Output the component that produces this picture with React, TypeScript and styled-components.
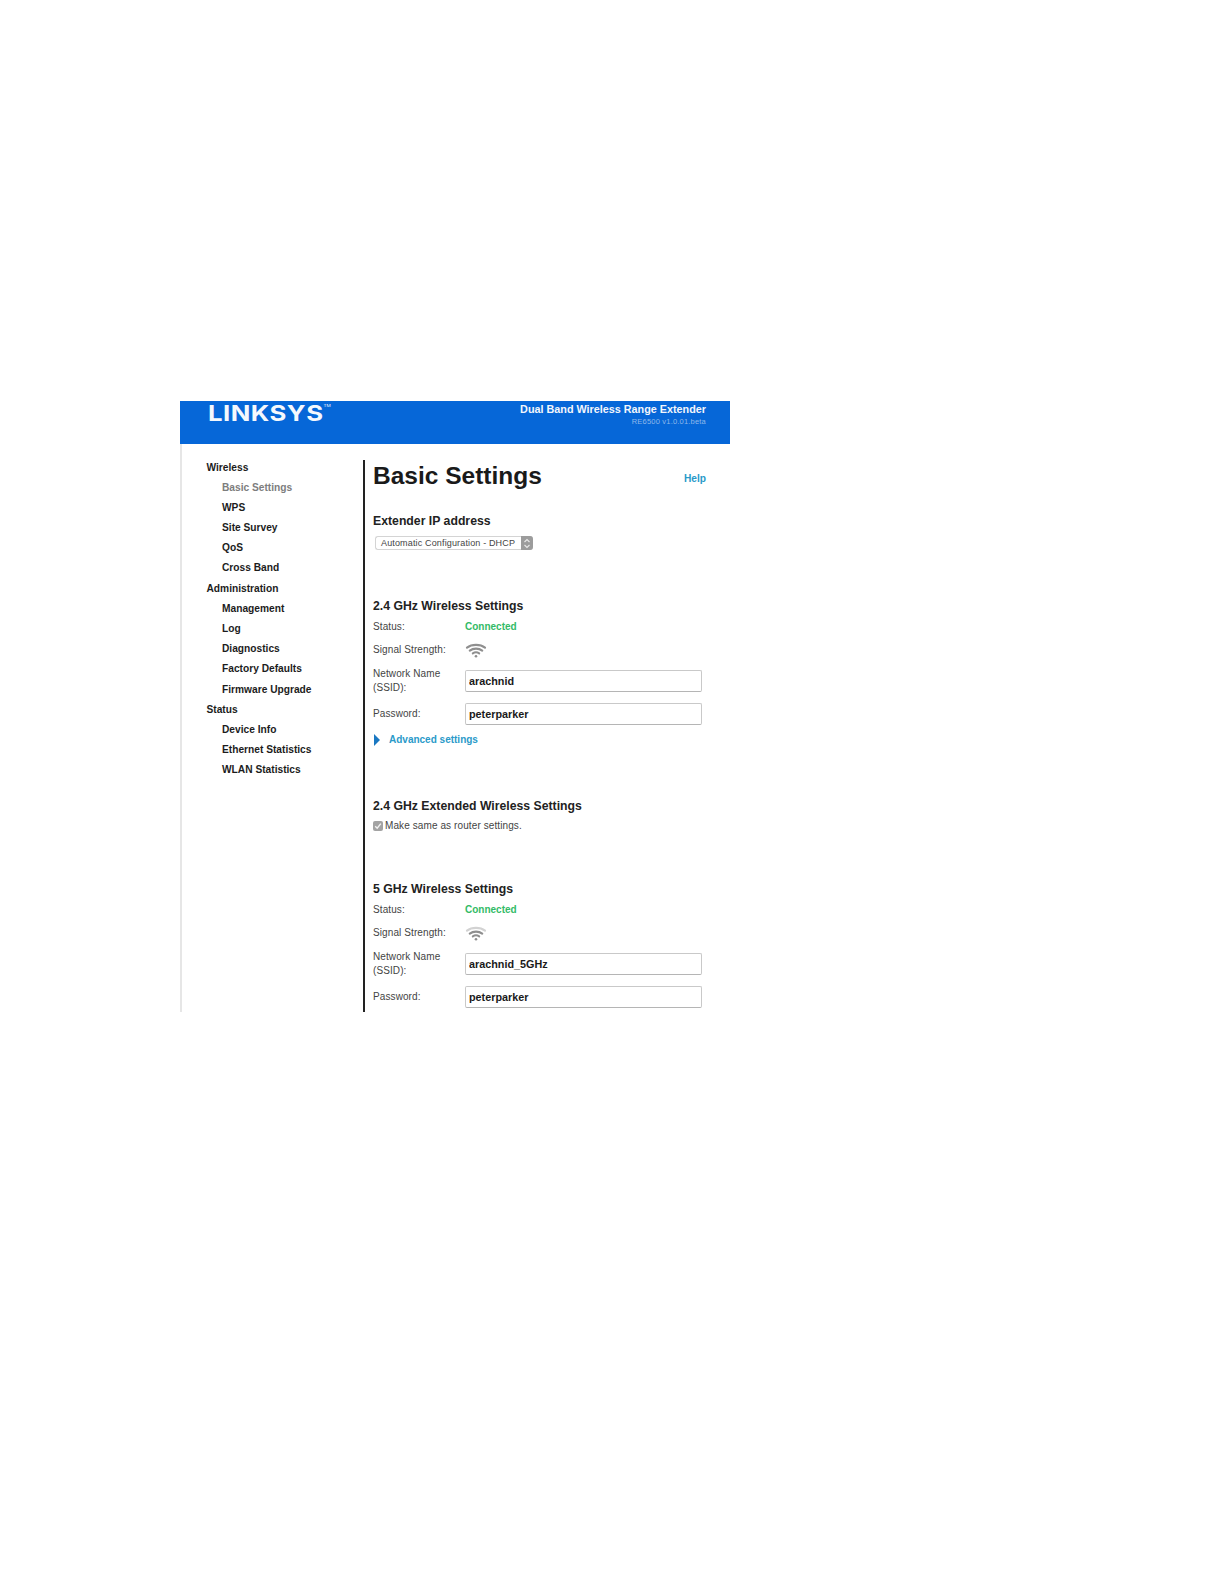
import React from 'react';
import styled, { createGlobalStyle } from 'styled-components';

const GlobalStyle = createGlobalStyle`
  html, body {
    margin: 0;
    padding: 0;
    background: #ffffff;
  }
  body {
    font-family: "Liberation Sans", Arial, sans-serif;
    color: #1c1c1c;
  }
`;

const Page = styled.div`
  width: 1224px;
  height: 1584px;
  padding: 401px 0 0 180px;
  box-sizing: border-box;
`;

const Frame = styled.div`
  width: 550px;
`;

const Header = styled.header`
  height: 43px;
  background: #0667d8;
  display: flex;
  justify-content: space-between;
  padding: 0 24px 0 28px;
  box-sizing: border-box;
`;

const Logo = styled.div`
  font-family: Inter, "Liberation Sans", sans-serif;
  font-size: 22px;
  line-height: 24px;
  font-weight: 700;
  letter-spacing: 0.4px;
  color: #f4f8fd;
  display: flex;
  align-items: flex-start;
  transform: scaleX(1.17);
  transform-origin: left center;
`;

const Trademark = styled.span`
  font-size: 4px;
  line-height: 10px;
  letter-spacing: 0;
  font-weight: 400;
`;

const Product = styled.div`
  text-align: right;
  padding-top: 1px;
`;

const ProductName = styled.div`
  font-size: 10.8px;
  line-height: 14px;
  font-weight: 700;
  color: #f2f6fc;
`;

const Version = styled.div`
  font-size: 7.5px;
  line-height: 10px;
  margin-top: 1px;
  color: #8fb8ea;
  letter-spacing: 0.2px;
`;

const Body = styled.div`
  display: flex;
  height: 568px;
  border-left: 2px solid #e6e6e6;
`;

const Sidebar = styled.nav`
  width: 181px;
  flex: none;
  padding: 13.5px 0 0 24.5px;
  box-sizing: border-box;
`;

const NavItem = styled.div<{ $child?: boolean; $active?: boolean }>`
  height: 20.2px;
  line-height: 20.2px;
  font-size: 10.2px;
  font-weight: 700;
  white-space: nowrap;
  padding-left: ${(p) => (p.$child ? '15.5px' : '0')};
  color: ${(p) => (p.$active ? '#7d7d7d' : '#1c1c1c')};
`;

const Content = styled.main`
  flex: 1;
  margin-top: 16px;
  border-left: 2px solid #222222;
  padding: 0 28px 0 8px;
  overflow: hidden;
`;

const TitleRow = styled.div`
  display: flex;
  justify-content: space-between;
  height: 42px;
`;

const Title = styled.h1`
  margin: 0;
  font-size: 24.5px;
  line-height: 32px;
  font-weight: 700;
  color: #1a1a1a;
`;

const HelpLink = styled.a`
  font-size: 10.2px;
  line-height: 14px;
  font-weight: 700;
  color: #2a9ac9;
  margin: 12px -4px 0 0;
`;

const SectionTitle = styled.h2<{ $top: number }>`
  margin: ${(p) => p.$top}px 0 0;
  font-size: 12.25px;
  line-height: 16px;
  font-weight: 700;
  color: #222222;
`;

const Select = styled.div`
  margin-top: 7px;
  width: 158px;
  height: 14px;
  margin-left: 2px;
  display: flex;
  justify-content: space-between;
  box-sizing: border-box;
  border: 1px solid #d4d4d4;
  border-right: none;
  border-radius: 3px;
  font-size: 9px;
  line-height: 12px;
  color: #444444;
  padding-left: 5px;
  letter-spacing: 0.15px;
  white-space: nowrap;
`;

const SelectArrows = styled.span`
  width: 12px;
  height: 14px;
  margin-top: -1px;
  background: #9c9c9c;
  border-radius: 0 3px 3px 0;
  display: flex;
  align-items: center;
  justify-content: center;
`;

const RowGroup = styled.div`
  margin-top: 3px;
`;

const Row = styled.div<{ $height: number }>`
  display: grid;
  grid-template-columns: 92px 237px;
  align-items: center;
  height: ${(p) => p.$height}px;
`;

const Label = styled.div`
  font-size: 10px;
  line-height: 14px;
  color: #444444;
  letter-spacing: 0.1px;
`;

const Connected = styled.div`
  font-size: 10px;
  font-weight: 700;
  color: #33bb66;
`;

const Field = styled.input`
  width: 237px;
  height: 22px;
  box-sizing: border-box;
  border: 1px solid #c9c9c9;
  border-bottom-color: #b5b5b5;
  border-radius: 2px;
  padding: 0 3px;
  outline: none;
  background: #ffffff;
  font-family: "Liberation Sans", Arial, sans-serif;
  font-size: 10.8px;
  font-weight: 700;
  color: #1a1a1a;
`;

const Advanced = styled.a`
  display: flex;
  align-items: center;
  gap: 9px;
  height: 16px;
  margin: 3px 0 0 1px;
  font-size: 10px;
  font-weight: 700;
  color: #2a9ac9;
`;

const Triangle = styled.span`
  width: 0;
  height: 0;
  border-left: 6px solid #1a78c2;
  border-top: 6px solid transparent;
  border-bottom: 6px solid transparent;
`;

const CheckRow = styled.label`
  display: flex;
  align-items: center;
  gap: 2px;
  height: 14px;
  margin-top: 5px;
  font-size: 10px;
  color: #444444;
  letter-spacing: 0.1px;
`;

const CheckBox = styled.span`
  width: 10px;
  height: 10px;
  border-radius: 2px;
  background: #a3a3a3;
  display: flex;
  align-items: center;
  justify-content: center;
`;

const WifiIcon = ({ faded }: { faded?: boolean }) => (
  <svg width="22" height="15" viewBox="0 0 22 15" fill="none" strokeLinecap="round">
    <path d="M2 4.6 C6.8 1 15.2 1 20 4.6" stroke={faded ? '#d2d2d2' : '#8f8f8f'} strokeWidth="2.2" />
    <path d="M4.8 7.6 C8.2 5 13.8 5 17.2 7.6" stroke="#8f8f8f" strokeWidth="2.2" />
    <path d="M7.8 10.4 C9.6 9.2 12.4 9.2 14.2 10.4" stroke="#8f8f8f" strokeWidth="2" />
    <circle cx="11" cy="13.2" r="1.3" fill="#8f8f8f" />
  </svg>
);

const navItems = [
  { label: 'Wireless' },
  { label: 'Basic Settings', child: true, active: true },
  { label: 'WPS', child: true },
  { label: 'Site Survey', child: true },
  { label: 'QoS', child: true },
  { label: 'Cross Band', child: true },
  { label: 'Administration' },
  { label: 'Management', child: true },
  { label: 'Log', child: true },
  { label: 'Diagnostics', child: true },
  { label: 'Factory Defaults', child: true },
  { label: 'Firmware Upgrade', child: true },
  { label: 'Status' },
  { label: 'Device Info', child: true },
  { label: 'Ethernet Statistics', child: true },
  { label: 'WLAN Statistics', child: true },
];

const WirelessRows = ({ ssid, faded }: { ssid: string; faded?: boolean }) => (
  <RowGroup>
    <Row $height={20}>
      <Label>Status:</Label>
      <Connected>Connected</Connected>
    </Row>
    <Row $height={27}>
      <Label>Signal Strength:</Label>
      <WifiIcon faded={faded} />
    </Row>
    <Row $height={35}>
      <Label>
        Network Name
        <br />
        (SSID):
      </Label>
      <Field readOnly value={ssid} />
    </Row>
    <Row $height={30}>
      <Label>Password:</Label>
      <Field readOnly value="peterparker" />
    </Row>
  </RowGroup>
);

const App: React.FC = () => (
  <Page>
    <GlobalStyle />
    <Frame>
      <Header>
        <Logo>
          LINKSYS<Trademark>TM</Trademark>
        </Logo>
        <Product>
          <ProductName>Dual Band Wireless Range Extender</ProductName>
          <Version>RE6500 v1.0.01.beta</Version>
        </Product>
      </Header>
      <Body>
        <Sidebar>
          {navItems.map((item) => (
            <NavItem key={item.label} $child={item.child} $active={item.active}>
              {item.label}
            </NavItem>
          ))}
        </Sidebar>
        <Content>
          <TitleRow>
            <Title>Basic Settings</Title>
            <HelpLink>Help</HelpLink>
          </TitleRow>
          <SectionTitle $top={11}>Extender IP address</SectionTitle>
          <Select>
            Automatic Configuration - DHCP
            <SelectArrows>
              <svg width="8" height="11" viewBox="0 0 8 11" fill="none" stroke="#e8e8e8" strokeWidth="1.2">
                <path d="M1.5 4 L4 1.5 L6.5 4" />
                <path d="M1.5 7 L4 9.5 L6.5 7" />
              </svg>
            </SelectArrows>
          </Select>
          <SectionTitle $top={47.5}>2.4 GHz Wireless Settings</SectionTitle>
          <WirelessRows ssid="arachnid" />
          <Advanced>
            <Triangle />
            Advanced settings
          </Advanced>
          <SectionTitle $top={50}>2.4 GHz Extended Wireless Settings</SectionTitle>
          <CheckRow>
            <CheckBox>
              <svg width="8" height="8" viewBox="0 0 8 8" fill="none" stroke="#f2f2f2" strokeWidth="1.4">
                <path d="M1.2 4.2 L3.2 6.2 L6.8 1.6" />
              </svg>
            </CheckBox>
            Make same as router settings.
          </CheckRow>
          <SectionTitle $top={48}>5 GHz Wireless Settings</SectionTitle>
          <WirelessRows ssid="arachnid_5GHz" faded />
        </Content>
      </Body>
    </Frame>
  </Page>
);

export default App;
